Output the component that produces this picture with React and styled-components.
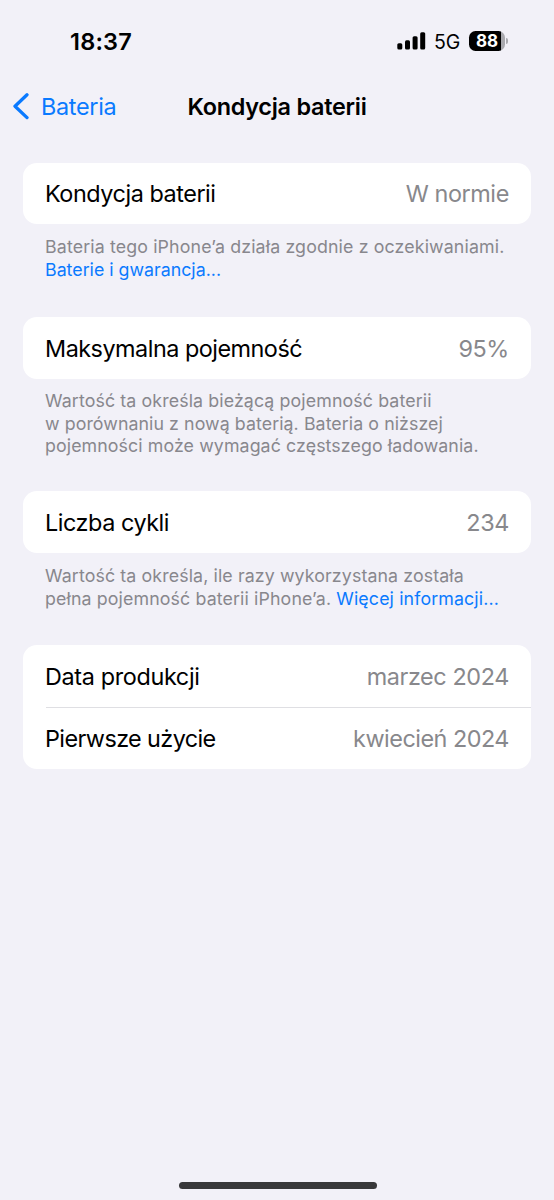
import React from "react";
import styled, { createGlobalStyle } from "styled-components";

const GlobalStyle = createGlobalStyle`
  * {
    box-sizing: border-box;
  }

  body {
    margin: 0;
    background: #f2f1f8;
    font-family: Inter, "Liberation Sans", sans-serif;
    color: #000;
  }
`;

const Screen = styled.div`
  display: flex;
  flex-direction: column;
  width: 554px;
  height: 1200px;
  overflow: hidden;
`;

const StatusBar = styled.header`
  display: flex;
  align-items: center;
  justify-content: space-between;
  height: 82px;
  padding: 0 46px 0 70px;
`;

const Time = styled.span`
  font-size: 23.5px;
  font-weight: 600;
  letter-spacing: 0.2px;
`;

const StatusIcons = styled.div`
  display: flex;
  align-items: center;
`;

const Network = styled.span`
  margin: 1px 9px 0 8px;
  font-size: 19.5px;
  letter-spacing: -0.2px;
`;

const Battery = styled.div`
  display: flex;
  align-items: center;
  gap: 1px;
`;

const BatteryLevel = styled.div`
  display: flex;
  align-items: center;
  justify-content: center;
  width: 36px;
  height: 20px;
  border-radius: 6.5px;
  background: linear-gradient(to right, #000 88%, #a9a9ae 88%);
  color: #fff;
  font-size: 17px;
  font-weight: 700;
`;

const BatteryTip = styled.div`
  width: 2px;
  height: 6px;
  border-radius: 0 2px 2px 0;
  background: #a9a9ae;
`;

const NavBar = styled.nav`
  display: grid;
  grid-template-columns: 1fr auto 1fr;
  align-items: center;
  height: 48px;
  padding: 0 12px;
`;

const BackLink = styled.a`
  display: flex;
  align-items: center;
  gap: 12px;
  color: #0a7aff;
  font-size: 23.4px;
  letter-spacing: -0.3px;
`;

const Title = styled.h1`
  margin: 0;
  font-size: 23.4px;
  font-weight: 600;
  letter-spacing: -0.25px;
`;

const Content = styled.main`
  flex: 1;
  padding: 32.7px 23px 0;
`;

const Section = styled.section`
  height: ${(props) => props.$height}px;
`;

const Card = styled.div`
  border-radius: 14px;
  background: #fff;
  overflow: hidden;
`;

const Row = styled.div`
  display: flex;
  align-items: center;
  justify-content: space-between;
  height: 61.7px;
  margin-left: 22.5px;
  padding-right: 22.5px;
  font-size: 23.4px;
  white-space: nowrap;

  & + & {
    border-top: 1.4px solid #dfdfe3;
  }
`;

const Label = styled.span`
  margin-left: -0.5px;
  letter-spacing: ${(props) => props.$spacing}px;
`;

const Value = styled.span`
  color: #88888c;
  letter-spacing: ${(props) => props.$spacing}px;
  margin-right: ${(props) => props.$spacing}px;
`;

const Footer = styled.p`
  margin: 0;
  padding: ${(props) => props.$top || 11.5}px 22px 0;
  color: #88878d;
  font-size: 17.8px;
  line-height: 22.7px;
  white-space: nowrap;
`;

const Line = styled.span`
  display: block;
  letter-spacing: ${(props) => props.$spacing || 0}px;
`;

const Link = styled.a`
  color: #0a7aff;
`;

const HomeIndicator = styled.div`
  align-self: center;
  width: 198px;
  height: 7px;
  margin: 0 0 11px 1px;
  border-radius: 4px;
  background: #38383a;
`;

const Signal = () => (
  <svg width="29" height="18" viewBox="0 0 29 18">
    <rect x="0.3" y="11.3" width="5" height="6.2" rx="1.5" />
    <rect x="8" y="8.3" width="5" height="9.2" rx="1.5" />
    <rect x="15.6" y="4.3" width="5" height="13.2" rx="1.5" />
    <rect x="23.2" y="0.3" width="5" height="17.2" rx="1.5" />
  </svg>
);

const Chevron = () => (
  <svg width="17" height="28" viewBox="0 0 17 28" fill="none">
    <path
      d="M15 2.8 3 14.2l12 11.4"
      stroke="#0a7aff"
      strokeWidth="3.3"
      strokeLinecap="round"
      strokeLinejoin="round"
    />
  </svg>
);

const Item = ({ label, value, labelSpacing = -0.45, valueSpacing = -0.4 }) => (
  <Row>
    <Label $spacing={labelSpacing}>{label}</Label>
    <Value $spacing={valueSpacing}>{value}</Value>
  </Row>
);

const App = () => {
  return (
    <Screen>
      <GlobalStyle />
      <StatusBar>
        <Time>18:37</Time>
        <StatusIcons>
          <Signal />
          <Network>5G</Network>
          <Battery>
            <BatteryLevel>88</BatteryLevel>
            <BatteryTip />
          </Battery>
        </StatusIcons>
      </StatusBar>

      <NavBar>
        <BackLink>
          <Chevron />
          Bateria
        </BackLink>
        <Title>Kondycja baterii</Title>
      </NavBar>

      <Content>
        <Section $height={154.5}>
          <Card>
            <Item label="Kondycja baterii" value="W normie" />
          </Card>
          <Footer $top={12}>
            <Line $spacing={0.13}>Bateria tego iPhone’a działa zgodnie z oczekiwaniami.</Line>
            <Line>
              <Link>Baterie i gwarancja...</Link>
            </Line>
          </Footer>
        </Section>

        <Section $height={174}>
          <Card>
            <Item label="Maksymalna pojemność" value="95%" labelSpacing={-0.5} />
          </Card>
          <Footer $top={11}>
            <Line $spacing={0.11}>Wartość ta określa bieżącą pojemność baterii</Line>
            <Line $spacing={0.07}>w porównaniu z nową baterią. Bateria o niższej</Line>
            <Line $spacing={0.09}>pojemności może wymagać częstszego ładowania.</Line>
          </Footer>
        </Section>

        <Section $height={154.3}>
          <Card>
            <Item label="Liczba cykli" value="234" />
          </Card>
          <Footer $top={12.3}>
            <Line $spacing={0.11}>Wartość ta określa, ile razy wykorzystana została</Line>
            <Line $spacing={0.12}>
              pełna pojemność baterii iPhone’a. <Link>Więcej informacji...</Link>
            </Line>
          </Footer>
        </Section>

        <Card>
          <Item label="Data produkcji" value="marzec 2024" labelSpacing={-0.35} />
          <Item label="Pierwsze użycie" value="kwiecień 2024" labelSpacing={-0.6} valueSpacing={-0.5} />
        </Card>
      </Content>

      <HomeIndicator />
    </Screen>
  );
};

export default App;
